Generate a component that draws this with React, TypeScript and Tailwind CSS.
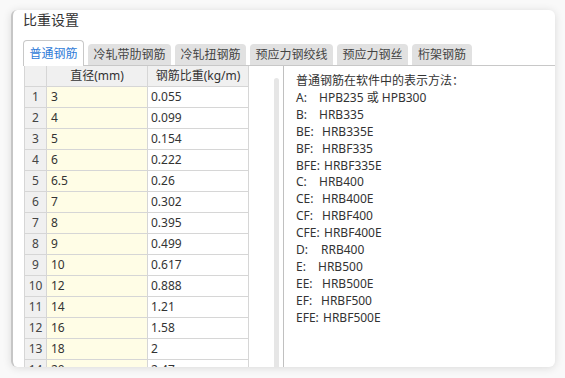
import React from "react";

const rows: [string, string, string][] = [
  ["1", "3", "0.055"],
  ["2", "4", "0.099"],
  ["3", "5", "0.154"],
  ["4", "6", "0.222"],
  ["5", "6.5", "0.26"],
  ["6", "7", "0.302"],
  ["7", "8", "0.395"],
  ["8", "9", "0.499"],
  ["9", "10", "0.617"],
  ["10", "12", "0.888"],
  ["11", "14", "1.21"],
  ["12", "16", "1.58"],
  ["13", "18", "2"],
  ["14", "20", "2.47"],
];

const lines: [string, string, string][] = [
  ["A:", "HPB235 或 HPB300", "w-[23px]"],
  ["B:", "HRB335", "w-[23px]"],
  ["BE:", "HRB335E", "w-[26px]"],
  ["BF:", "HRBF335", "w-[26px]"],
  ["BFE:", "HRBF335E", "w-[28px]"],
  ["C:", "HRB400", "w-[23px]"],
  ["CE:", "HRB400E", "w-[26px]"],
  ["CF:", "HRBF400", "w-[26px]"],
  ["CFE:", "HRBF400E", "w-[28px]"],
  ["D:", "RRB400", "w-[25px]"],
  ["E:", "HRB500", "w-[22px]"],
  ["EE:", "HRB500E", "w-[26px]"],
  ["EF:", "HRBF500", "w-[25px]"],
  ["EFE:", "HRBF500E", "w-[27px]"],
];

const tabs: [string, string][] = [
  ["冷轧带肋钢筋", "w-[83px]"],
  ["冷轧扭钢筋", "w-[71px]"],
  ["预应力钢绞线", "w-[83px]"],
  ["预应力钢丝", "w-[71px]"],
  ["桁架钢筋", "w-[60px]"],
];

export default function App() {
  return (
    <div
      className="w-[565px] h-[378px] bg-[#f9f9f9] pt-[10px] pl-[11px] overflow-hidden"
      style={{ fontFamily: '"Noto Sans", "Noto Sans CJK SC", sans-serif' }}
    >
      <div className="w-[544px] h-[357px] bg-white rounded-[6px] border-l-2 border-[#c6c6c6] shadow-[0_1px_8px_rgba(0,0,0,0.13)] overflow-hidden flex flex-col">
        <div className="pl-[10px] h-[20px] text-[14px] leading-[20px] text-[#333]">比重设置</div>
        <div className="mt-[10px] ml-[10px] h-[26px] flex items-end border-b border-[#c8c8c8]">
          <div className="w-[61px] h-[26px] -mb-px bg-white border border-b-0 border-[#c8c8c8] rounded-t-[4px] flex items-center justify-center text-[12px] text-[#2f7bd8]">
            普通钢筋
          </div>
          {tabs.map(([t, w]) => (
            <div
              key={t}
              className={`${w} ml-[4px] h-[21px] bg-[#e1e1e1] rounded-t-[4px] flex items-center justify-center text-[12px] text-[#444]`}
            >
              {t}
            </div>
          ))}
        </div>
        <div className="flex flex-1 ml-[10px] min-h-0">
          <div className="w-[260px] flex justify-between pl-px pr-[4px]">
            <div className="w-[225px] border-l border-[#d6d6d6] text-[12px] text-[#333]">
              <div className="grid grid-cols-[22px_101px_101px] h-[21px]">
                <div className="bg-[#f0f0f0] border-r border-b border-[#d6d6d6]" />
                <div className="bg-[#f0f0f0] border-r border-b border-[#d6d6d6] flex items-center justify-center">直径(mm)</div>
                <div className="bg-[#f0f0f0] border-r border-b border-[#d6d6d6] flex items-center justify-center">钢筋比重(kg/m)</div>
              </div>
              {rows.map(([i, d, w]) => (
                <div key={i} className="grid grid-cols-[22px_101px_101px] h-[21px]">
                  <div className="bg-[#f0f0f0] border-r border-b border-[#d6d6d6] flex items-center justify-center text-[#444]">{i}</div>
                  <div className="bg-[#fffde6] border-r border-b border-[#d6d6d6] flex items-center pl-[4px]">{d}</div>
                  <div className="bg-white border-r border-b border-[#d6d6d6] flex items-center pl-[3px]">{w}</div>
                </div>
              ))}
            </div>
            <div className="w-[5px] mt-[12px] bg-[#e6e6e6] rounded-t-[3px]" />
          </div>
          <div className="flex-1 border-l border-[#c0c0c0] pl-[12px] pt-[7px] text-[12px] leading-[16.9px] text-[#333]">
            <div>普通钢筋在软件中的表示方法：</div>
            {lines.map(([l, v, w]) => (
              <div key={l} className="flex whitespace-nowrap">
                <span className={`${w} inline-block shrink-0`}>{l}</span>
                <span>{v}</span>
              </div>
            ))}
          </div>
        </div>
      </div>
    </div>
  );
}
